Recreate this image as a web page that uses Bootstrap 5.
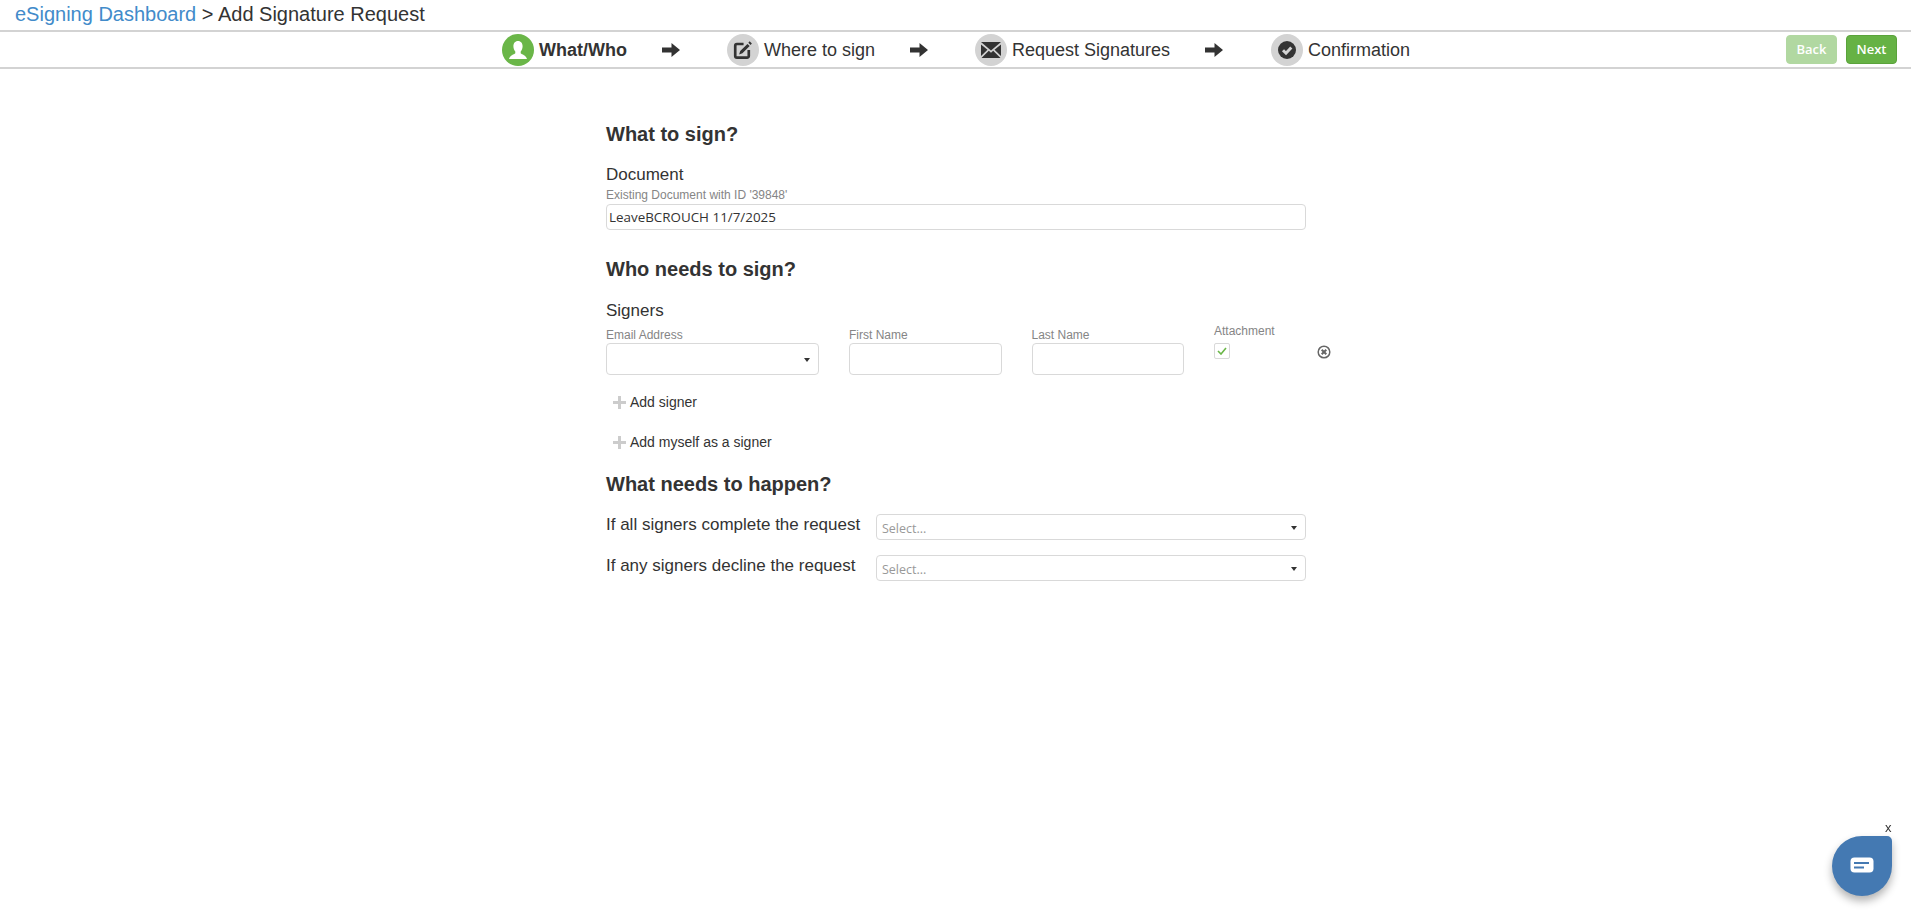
<!DOCTYPE html>
<html lang="en">
<head>
<meta charset="utf-8">
<title>Add Signature Request</title>
<link href="https://cdn.jsdelivr.net/npm/bootstrap@5.3.0/dist/css/bootstrap.min.css" rel="stylesheet">
<style>
html,body{height:100%;overflow:hidden}
body{font-family:"Liberation Sans",Arial,sans-serif;color:#333;font-size:14px;background:#fff}
a{text-decoration:none}
.topcrumb{height:32px;border-bottom:2px solid #d3d3d3;padding-left:15px;font-size:20px;line-height:28px}
.topcrumb a{color:#428bca}
.stepbar{height:37px;border-bottom:2px solid #d3d3d3;position:relative;padding-right:14px;gap:9px}
.steps{position:absolute;left:502px;top:2px;height:32px}
.stepitem{display:flex;align-items:center;height:32px;font-size:18px;line-height:32px}
.stepcirc{width:32px;height:32px;border-radius:50%;background:#d3d3d3;display:flex;align-items:center;justify-content:center;margin-right:5px;flex:none}
.stepcirc.on{background:#6ab648}
.arrow{display:block;flex:none}
.s1{width:160px}.s1b{width:65px}
.s2{width:183px}.s2b{width:65px}
.s3{width:230px}.s3b{width:66px}
.wizbtn{width:51px;height:29px;padding:0;font-family:"Open Sans",sans-serif;font-size:13px;line-height:27px;font-weight:600;background:#66b245;border:1px solid #5aa33b;color:#fff;border-radius:4px}
.wizbtn:disabled{background:#66b245;border-color:#66b245;color:#fff;opacity:.5}
.formwrap{width:700px;margin-left:606px}
.sect{font-size:20px;font-weight:700;line-height:24px;margin:0;color:#333}
.fldlabel{font-size:17px;line-height:20px;color:#333}
.hint{font-size:12px;line-height:14px;color:#858585;display:block}
.tinput{display:block;height:26px;width:100%;border:1px solid #d9d9d9;border-radius:4px;background:#fff;padding:0 2px;font-family:"Open Sans",sans-serif;font-size:13.4px;line-height:24px;color:#333}
.comboish{position:relative;height:32px}
.caretdn{position:absolute;right:8px;top:50%;margin-top:-1px;width:0;height:0;border-left:3.5px solid transparent;border-right:3.5px solid transparent;border-top:4px solid #333}
.w-email{width:213px;flex:none}.w-name{width:152.5px;flex:none}.w-att{width:103px;flex:none}
.signrow{gap:30px;align-items:flex-start}
.chkbox{width:16px;height:16px;border:1px solid #d9d9d9;border-radius:2px;display:flex;align-items:center;justify-content:center;margin-top:0}
.addline{font-size:14px;line-height:20px;color:#333;padding-left:7px;display:flex;align-items:center}
.addline svg{margin-right:4px}
.actlabel{width:270px;font-size:17px;line-height:20px;color:#333;flex:none;padding-top:1px}
.selectish{position:relative;height:26px;flex:1;border:1px solid #d9d9d9;border-radius:4px;padding:1px 5px 0;font-family:"Open Sans",sans-serif;font-size:12.5px;line-height:25px;color:#999}
.chatfab{position:fixed;left:1832px;top:836px;width:60px;height:60px;border-radius:50% 5px 50% 50%;background:#4479b2;box-shadow:0 5px 9px rgba(0,0,0,.3);display:flex;align-items:center;justify-content:center}
.chatx{position:fixed;left:1885px;top:820px;font-size:13px;line-height:16px;color:#333}
.m-a{margin-top:53px}.m-b{margin-top:19px}.m-c{margin-top:27px}
</style>
</head>
<body>
<div class="topcrumb"><a href="#">eSigning Dashboard</a> &gt; Add Signature Request</div>
<div class="stepbar d-flex justify-content-end align-items-center">
  <div class="steps d-flex">
    <div class="stepitem s1 fw-bold">
      <span class="stepcirc on"><svg width="24" height="24" viewBox="0 0 24 24"><path fill="#fff" d="M12 3c3 0 4.600 2.300 4.600 5.300 0 2.100-.8 4-1.900 5.200v1.700c1.300 1.300 5.300 1.800 6.300 5.800H3c1-4 5-4.500 6.300-5.800v-1.700C8.200 12.300 7.400 10.400 7.400 8.300 7.400 5.300 9 3 12 3z"/></svg></span>What/Who
    </div>
    <div class="s1b d-flex align-items-center"><svg class="arrow" width="18" height="14" viewBox="0 0 18 14"><path fill="#333" d="M0 4.500h9.500V0L18 7l-8.500 7V9.500H0z"/></svg></div>
    <div class="stepitem s2">
      <span class="stepcirc"><svg width="20" height="20" viewBox="0 0 18 18"><path fill="none" stroke="#333" stroke-width="2.400" d="M9.500 3.600H3.500a1.500 1.500 0 0 0-1.500 1.500v9.200a1.500 1.500 0 0 0 1.500 1.500h9.200a1.500 1.500 0 0 0 1.500-1.500V9"/><path fill="#333" d="M13 3.500l2 2-6.500 6.500-3 1 1-3zM15 1.200l2 2-1.200 1.200-2-2z"/></svg></span>Where to sign
    </div>
    <div class="s2b d-flex align-items-center"><svg class="arrow" width="18" height="14" viewBox="0 0 18 14"><path fill="#333" d="M0 4.500h9.500V0L18 7l-8.500 7V9.500H0z"/></svg></div>
    <div class="stepitem s3">
      <span class="stepcirc"><svg width="20" height="16" viewBox="0 0 20 16"><path fill="#333" d="M0 0h20L10 8.500zM0 2.500V14l6.500-6.300zM20 2.500V14l-6.500-6.300zM7.800 8.800l2.200 2 2.200-2L19.500 16H.5z"/></svg></span>Request Signatures
    </div>
    <div class="s3b d-flex align-items-center"><svg class="arrow" width="18" height="14" viewBox="0 0 18 14"><path fill="#333" d="M0 4.500h9.500V0L18 7l-8.500 7V9.500H0z"/></svg></div>
    <div class="stepitem">
      <span class="stepcirc"><svg width="18" height="18" viewBox="0 0 18 18"><circle cx="9" cy="9" r="9" fill="#333"/><path fill="none" stroke="#d3d3d3" stroke-width="3" d="M5 9.200l3 3L13.300 6.500"/></svg></span>Confirmation
    </div>
  </div>
  <button class="btn wizbtn" disabled>Back</button>
  <button class="btn wizbtn">Next</button>
</div>
<main class="formwrap">
  <h2 class="sect m-a">What to sign?</h2>
  <div class="fldlabel m-b">Document</div>
  <span class="hint" style="margin-top:3px">Existing Document with ID '39848'</span>
  <div class="tinput" style="margin-top:2px">LeaveBCROUCH 11/7/2025</div>
  <h2 class="sect m-c">Who needs to sign?</h2>
  <div class="fldlabel" style="margin-top:20px">Signers</div>
  <div class="d-flex signrow" style="margin-top:7px">
    <div class="w-email"><span class="hint" style="margin-bottom:1px">Email Address</span><div class="tinput comboish"><span class="caretdn"></span></div></div>
    <div class="w-name"><span class="hint" style="margin-bottom:1px">First Name</span><div class="tinput comboish"></div></div>
    <div class="w-name"><span class="hint" style="margin-bottom:1px">Last Name</span><div class="tinput comboish"></div></div>
    <div class="w-att" style="margin-top:-4px"><span class="hint" style="margin-bottom:5px">Attachment</span><div class="chkbox"><svg width="10" height="8" viewBox="0 0 10 8"><path fill="none" stroke="#6ab648" stroke-width="1.600" d="M1 4l3 3 5-6"/></svg></div></div>
    <svg style="margin:17px 0 0 -30px;flex:none" width="14" height="14" viewBox="0 0 14 14"><circle cx="7" cy="7" r="5.800" fill="none" stroke="#666" stroke-width="1.500"/><path stroke="#666" stroke-width="2" d="M4.700 4.700l4.600 4.600M9.300 4.700L4.700 9.300"/></svg>
  </div>
  <div class="addline" style="margin-top:17px"><svg width="13" height="13" viewBox="0 0 13 13"><path fill="#ccc" d="M5 0h3v5h5v3H8v5H5V8H0V5h5z"/></svg>Add signer</div>
  <div class="addline" style="margin-top:20px"><svg width="13" height="13" viewBox="0 0 13 13"><path fill="#ccc" d="M5 0h3v5h5v3H8v5H5V8H0V5h5z"/></svg>Add myself as a signer</div>
  <h2 class="sect" style="margin-top:20px">What needs to happen?</h2>
  <div class="d-flex align-items-start" style="margin-top:18px"><div class="actlabel">If all signers complete the request</div><div class="selectish">Select...<span class="caretdn"></span></div></div>
  <div class="d-flex align-items-start" style="margin-top:15px"><div class="actlabel">If any signers decline the request</div><div class="selectish">Select...<span class="caretdn"></span></div></div>
</main>
<span class="chatx">x</span>
<div class="chatfab"><svg width="24" height="18" viewBox="0 0 24 18"><rect x="0.500" y="0.500" width="23" height="15" rx="4" fill="#fff"/><path d="M4 6h15M4 10.500h10" stroke="#4479b2" stroke-width="1.800"/></svg></div>
<script src="https://cdn.jsdelivr.net/npm/bootstrap@5.3.0/dist/js/bootstrap.bundle.min.js"></script>
</body>
</html>
